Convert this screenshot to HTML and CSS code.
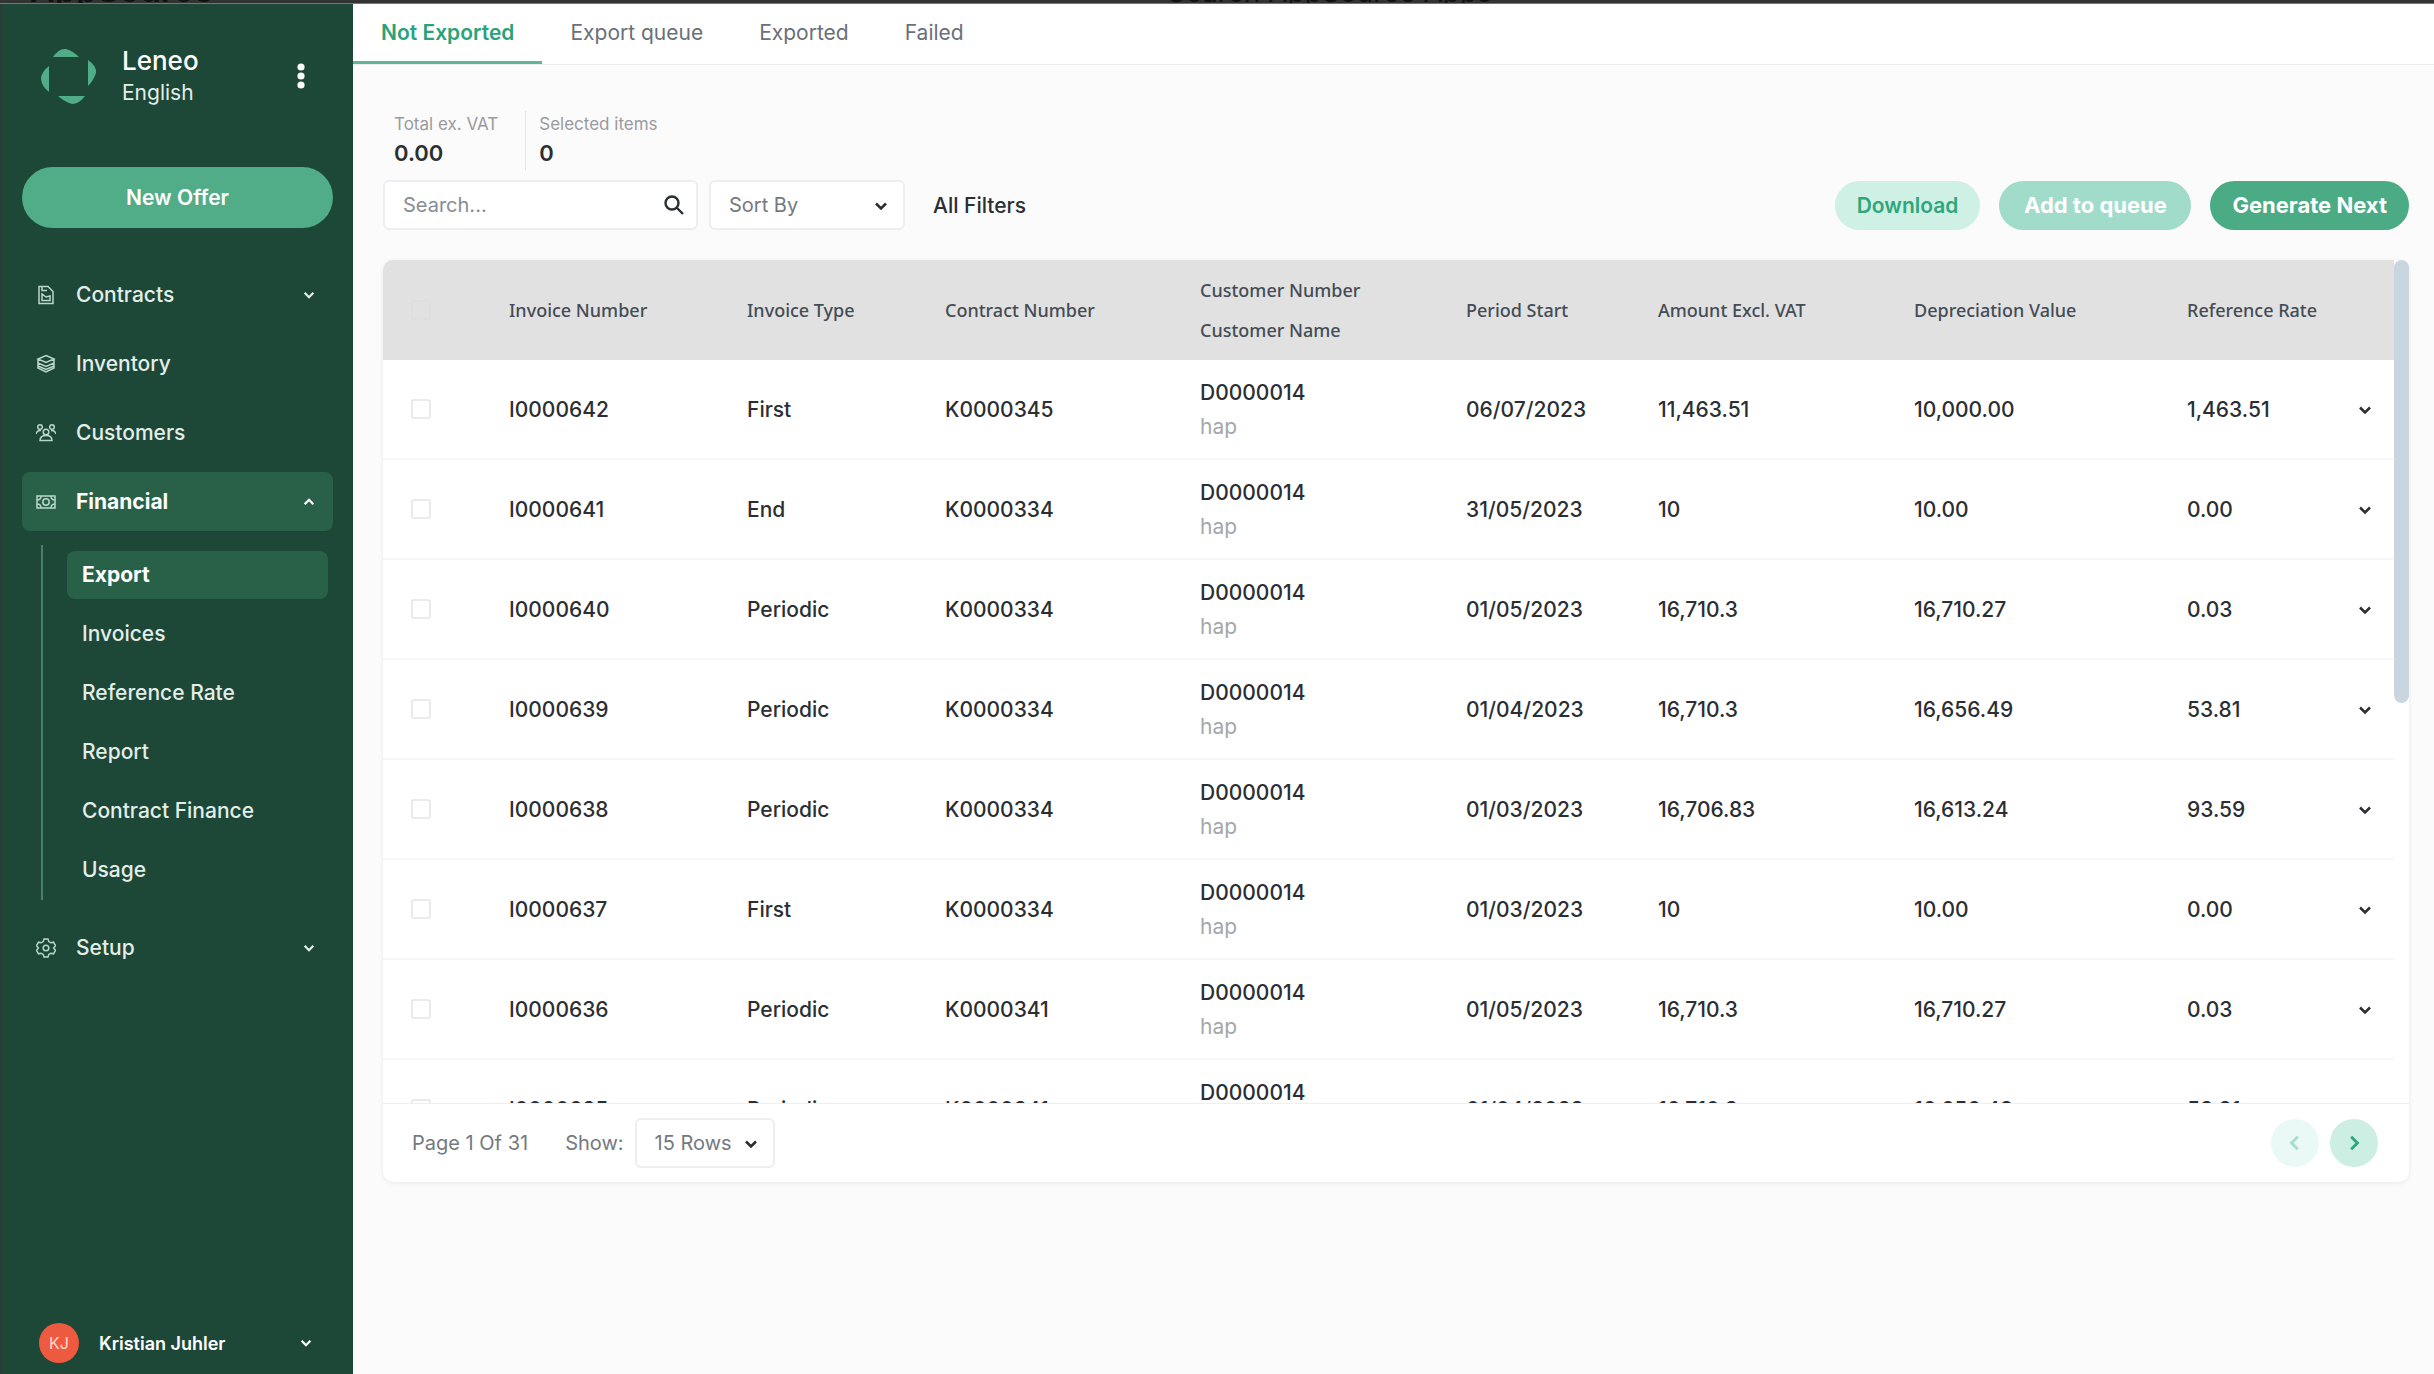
FILE: index.html
```html
<!DOCTYPE html>
<html lang="en">
<head>
  <meta charset="UTF-8" />
  <meta name="viewport" content="width=device-width, initial-scale=1.0" />
  <title>Leneo - Export</title>
  <link rel="stylesheet" href="styles.css">
</head>
<body>
  <svg class="sprite" aria-hidden="true">
    <symbol id="down" viewBox="0 0 16 16"><path d="M3 5.5l5 5 5-5" fill="none" stroke="currentColor" stroke-width="2.6" /></symbol>
    <symbol id="up" viewBox="0 0 16 16"><path d="M3 10.5l5-5 5 5" fill="none" stroke="currentColor" stroke-width="2.6" /></symbol>
  </svg>

  <div class="topstrip"><span class="site">AppSource</span><span>Search AppSource Apps</span></div>

  <div class="app">
    <aside class="sidebar">
      <div class="brand">
        <svg class="logo" viewBox="0 0 56 56" aria-hidden="true">
          <g fill="#50ad87">
            <path d="M12 9Q18 0 25 1Q32 3 38 9Z" />
            <path d="M47 12Q56 18 55 25Q53 32 47 38Z" />
            <path d="M44 48Q38 56 31 56Q24 54 17 48Z" />
            <path d="M8 18Q0 24 0 31Q1 39 8 44Z" />
          </g>
        </svg>
        <div class="brand-text">
          <strong>Leneo</strong>
          <span>English</span>
        </div>
        <button class="dots" type="button" aria-label="Menu">
          <svg viewBox="0 0 8 26"><g fill="#fff"><circle cx="4" cy="4" r="3.6" /><circle cx="4" cy="13" r="3.6" /><circle cx="4" cy="22" r="3.6" /></g></svg>
        </button>
      </div>

      <button class="new-offer" type="button">New Offer</button>

      <nav class="nav">
        <a class="nav-item" href="#">
          <svg class="nav-icon" viewBox="0 0 20 20"><path d="M3 1.5h9l5 5v12H3zM6 1.5v4h5M6 15.5V9l4 3 4-1v4.500z" /></svg>
          Contracts
          <svg class="chev"><use href="#down" /></svg>
        </a>
        <a class="nav-item" href="#">
          <svg class="nav-icon" viewBox="0 0 20 20"><path d="M10 1.500l8 3.500-8 3.500L2 5zM2 5v4l8 3.500L18 9V5M2 9v5l8 4 8-4V9M2 12l8 3.500 8-3.500" /></svg>
          Inventory
        </a>
        <a class="nav-item" href="#">
          <svg class="nav-icon" viewBox="0 0 20 20"><circle cx="4" cy="4" r="2.300" /><circle cx="16" cy="4" r="2.300" /><circle cx="10" cy="9" r="2.800" /><path d="M0 11q1-4 5-3.500M20 11q-1-4-5-3.500M4 17.500q0-5 6-5t6 5z" /></svg>
          Customers
        </a>
        <a class="nav-item active" href="#">
          <svg class="nav-icon" viewBox="0 0 20 20"><path d="M1 4h18v12H1zM1 8q4 0 4-4M19 8q-4 0-4-4M1 12q4 0 4 4M19 12q-4 0-4 4" /><circle cx="10" cy="10" r="3.200" /></svg>
          Financial
          <svg class="chev"><use href="#up" /></svg>
        </a>
        <div class="subnav">
          <a class="active" href="#">Export</a>
          <a href="#">Invoices</a>
          <a href="#">Reference Rate</a>
          <a href="#">Report</a>
          <a href="#">Contract Finance</a>
          <a href="#">Usage</a>
        </div>
        <a class="nav-item" href="#">
          <svg class="nav-icon" viewBox="0 0 20 20"><path d="M8 1h4l.8 2.600 2 1.200 2.700-.6 2 3.400L17.600 10l1.900 2.400-2 3.400-2.700-.6-2 1.200L12 19H8l-.8-2.600-2-1.200-2.700.6-2-3.400L2.400 10 .5 7.600l2-3.400 2.700.6 2-1.200z" /><circle cx="10" cy="10" r="2.800" /></svg>
          Setup
          <svg class="chev"><use href="#down" /></svg>
        </a>
      </nav>

      <button class="user" type="button">
        <span class="avatar">KJ</span>
        Kristian Juhler
        <svg class="chev"><use href="#down" /></svg>
      </button>
    </aside>

    <main class="main">
      <nav class="tabs">
        <a class="active" href="#">Not Exported</a>
        <a href="#">Export queue</a>
        <a href="#">Exported</a>
        <a href="#">Failed</a>
      </nav>

      <div class="content">
        <div class="stats">
          <div class="stat"><span>Total ex. VAT</span><strong>0.00</strong></div>
          <div class="stat"><span>Selected items</span><strong>0</strong></div>
        </div>

        <div class="toolbar">
          <div class="search">
            <input type="text" placeholder="Search..." aria-label="Search" />
            <svg viewBox="0 0 22 22" aria-hidden="true"><circle cx="9" cy="9" r="6.500" /><path d="M13.500 13.500l6.500 6.500" /></svg>
          </div>
          <div class="select sort">
            <select aria-label="Sort By"><option>Sort By</option></select>
            <svg class="chev"><use href="#down" /></svg>
          </div>
          <button class="filters" type="button">All Filters</button>
          <div class="actions">
            <button class="pill light" type="button">Download</button>
            <button class="pill faded" type="button">Add to queue</button>
            <button class="pill" type="button">Generate Next</button>
          </div>
        </div>

        <section class="card">
          <div class="scroll-area">
            <div class="table-wrap">
              <table>
                <colgroup>
                  <col class="c-check"><col class="c-number"><col class="c-type"><col class="c-contract"><col class="c-customer"><col class="c-period"><col class="c-amount"><col class="c-depr"><col class="c-rate"><col class="c-more">
                </colgroup>
                <thead>
                  <tr>
                    <th class="check"><input type="checkbox" aria-label="Select all" /></th>
                    <th>Invoice Number</th>
                    <th>Invoice Type</th>
                    <th>Contract Number</th>
                    <th>Customer Number<span>Customer Name</span></th>
                    <th>Period Start</th>
                    <th>Amount Excl. VAT</th>
                    <th>Depreciation Value</th>
                    <th>Reference Rate</th>
                    <th></th>
                  </tr>
                </thead>
                <tbody>
                  <tr>
                    <td class="check"><input type="checkbox" aria-label="Select I0000642" /></td>
                    <td>I0000642</td><td>First</td><td>K0000345</td>
                    <td>D0000014<span>hap</span></td>
                    <td>06/07/2023</td><td>11,463.51</td><td>10,000.00</td><td>1,463.51</td>
                    <td class="more"><button type="button" aria-label="Details"><svg class="chev"><use href="#down" /></svg></button></td>
                  </tr>
                  <tr>
                    <td class="check"><input type="checkbox" aria-label="Select I0000641" /></td>
                    <td>I0000641</td><td>End</td><td>K0000334</td>
                    <td>D0000014<span>hap</span></td>
                    <td>31/05/2023</td><td>10</td><td>10.00</td><td>0.00</td>
                    <td class="more"><button type="button" aria-label="Details"><svg class="chev"><use href="#down" /></svg></button></td>
                  </tr>
                  <tr>
                    <td class="check"><input type="checkbox" aria-label="Select I0000640" /></td>
                    <td>I0000640</td><td>Periodic</td><td>K0000334</td>
                    <td>D0000014<span>hap</span></td>
                    <td>01/05/2023</td><td>16,710.3</td><td>16,710.27</td><td>0.03</td>
                    <td class="more"><button type="button" aria-label="Details"><svg class="chev"><use href="#down" /></svg></button></td>
                  </tr>
                  <tr>
                    <td class="check"><input type="checkbox" aria-label="Select I0000639" /></td>
                    <td>I0000639</td><td>Periodic</td><td>K0000334</td>
                    <td>D0000014<span>hap</span></td>
                    <td>01/04/2023</td><td>16,710.3</td><td>16,656.49</td><td>53.81</td>
                    <td class="more"><button type="button" aria-label="Details"><svg class="chev"><use href="#down" /></svg></button></td>
                  </tr>
                  <tr>
                    <td class="check"><input type="checkbox" aria-label="Select I0000638" /></td>
                    <td>I0000638</td><td>Periodic</td><td>K0000334</td>
                    <td>D0000014<span>hap</span></td>
                    <td>01/03/2023</td><td>16,706.83</td><td>16,613.24</td><td>93.59</td>
                    <td class="more"><button type="button" aria-label="Details"><svg class="chev"><use href="#down" /></svg></button></td>
                  </tr>
                  <tr>
                    <td class="check"><input type="checkbox" aria-label="Select I0000637" /></td>
                    <td>I0000637</td><td>First</td><td>K0000334</td>
                    <td>D0000014<span>hap</span></td>
                    <td>01/03/2023</td><td>10</td><td>10.00</td><td>0.00</td>
                    <td class="more"><button type="button" aria-label="Details"><svg class="chev"><use href="#down" /></svg></button></td>
                  </tr>
                  <tr>
                    <td class="check"><input type="checkbox" aria-label="Select I0000636" /></td>
                    <td>I0000636</td><td>Periodic</td><td>K0000341</td>
                    <td>D0000014<span>hap</span></td>
                    <td>01/05/2023</td><td>16,710.3</td><td>16,710.27</td><td>0.03</td>
                    <td class="more"><button type="button" aria-label="Details"><svg class="chev"><use href="#down" /></svg></button></td>
                  </tr>
                  <tr>
                    <td class="check"><input type="checkbox" aria-label="Select I0000635" /></td>
                    <td>I0000635</td><td>Periodic</td><td>K0000341</td>
                    <td>D0000014<span>hap</span></td>
                    <td>01/04/2023</td><td>16,710.3</td><td>16,656.49</td><td>53.81</td>
                    <td class="more"><button type="button" aria-label="Details"><svg class="chev"><use href="#down" /></svg></button></td>
                  </tr>
                </tbody>
              </table>
            </div>
            <div class="track"><div class="thumb"></div></div>
          </div>

          <footer class="pager">
            <span>Page 1 Of 31</span>
            <label for="rows">Show:</label>
            <div class="select rows">
              <select id="rows"><option>15 Rows</option></select>
              <svg class="chev"><use href="#down" /></svg>
            </div>
            <div class="pager-buttons">
              <button type="button" aria-label="Previous page" disabled><svg viewBox="0 0 16 16"><path d="M10.500 2.500L5 8l5.500 5.500" /></svg></button>
              <button type="button" aria-label="Next page"><svg viewBox="0 0 16 16"><path d="M5.500 2.500L11 8l-5.500 5.500" /></svg></button>
            </div>
          </footer>
        </section>
      </div>
    </main>
  </div>
</body>
</html>
```
FILE: styles.css
```css
* {
  box-sizing: border-box;
}
body {
  margin: 0;
  min-height: 100vh;
  display: flex;
  flex-direction: column;
  font-family: Inter, "Open Sans", sans-serif;
  font-size: 20px;
  color: #2b2f33;
  background: #fbfbfb;
}
a {
  color: inherit;
  text-decoration: none;
}
button, input, select {
  font: inherit;
  color: inherit;
}
button {
  border: none;
  background: none;
  padding: 0;
}
.sprite {
  position: absolute;
  width: 0;
  height: 0;
}
.chev {
  width: 16px;
  height: 16px;
}

/* strip above the app */
.topstrip {
  height: 4px;
  overflow: hidden;
  display: flex;
  align-items: flex-end;
  gap: 954px;
  padding-left: 30px;
  background: #333;
  border-bottom: 1px solid #777;
  color: #111;
  font-size: 28px;
  font-weight: 400;
  line-height: 22px;
  white-space: nowrap;
}
.topstrip .site {
  font-size: 34px;
  font-weight: 600;
  line-height: 27px;
}
.app {
  flex: 1;
  display: flex;
}

/* sidebar */
.sidebar {
  width: 353px;
  flex-shrink: 0;
  display: flex;
  flex-direction: column;
  padding: 38px 20px 11px;
  background: #1d4737;
  border-left: 2px solid #30393a;
  color: #e3eee9;
  font-weight: 500;
}
.brand {
  display: flex;
  align-items: center;
  padding: 0 28px 0 19px;
}
.logo {
  width: 56px;
  height: 56px;
}
.brand-text {
  flex: 1;
  display: flex;
  flex-direction: column;
  margin-left: 25px;
  padding-top: 3px;
  font-size: 21px;
  font-weight: 400;
  line-height: 32px;
}
.brand-text strong {
  color: #fff;
  font-size: 26px;
  font-weight: 500;
}
.dots svg {
  display: block;
  width: 8px;
  height: 26px;
}
.new-offer {
  height: 61px;
  margin: 58px 0 37px;
  border-radius: 31px;
  background: #50ad87;
  color: #fff;
  font-size: 21px;
  font-weight: 600;
}
.nav {
  display: flex;
  flex-direction: column;
  gap: 10px;
  font-size: 21px;
}
.nav-item {
  height: 59px;
  display: flex;
  align-items: center;
  padding: 0 17px 0 14px;
  border-radius: 8px;
}
.nav-icon {
  width: 20px;
  height: 20px;
  margin-right: 20px;
  fill: none;
  stroke: #b9d6ca;
  stroke-width: 1.5;
}
.nav-item .chev, .user .chev {
  width: 14px;
  height: 14px;
  margin-left: auto;
}
.nav .active {
  background: #296148;
  color: #fff;
  font-weight: 700;
}
.subnav {
  display: flex;
  flex-direction: column;
  gap: 11px;
  margin: 4px 5px 8px 19px;
  padding: 6px 0;
  border-left: 2px solid #4a7f6a;
}
.subnav a {
  height: 48px;
  margin-left: 24px;
  padding-left: 15px;
  border-radius: 8px;
  line-height: 47px;
}
.user {
  display: flex;
  align-items: center;
  margin-top: auto;
  padding: 0 20px 0 17px;
  color: #fff;
  font-size: 18px;
  font-weight: 600;
}
.avatar {
  width: 40px;
  height: 40px;
  margin-right: 20px;
  border-radius: 50%;
  background: #ee5a40;
  color: #ffd9cf;
  font-size: 16px;
  font-weight: 400;
  line-height: 40px;
}

/* tabs */
.main {
  flex: 1;
  min-width: 0;
}
.tabs {
  display: flex;
  height: 61px;
  background: #fff;
  border-bottom: 1px solid #ececec;
  color: #6a6f78;
  font-size: 21px;
}
.tabs a {
  padding: 0 28px;
  line-height: 58px;
}
.tabs .active {
  border-bottom: 3px solid #5fb598;
  color: #2ba278;
  font-weight: 600;
}
.content {
  padding: 46px 25px 0 30px;
}

/* totals */
.stats {
  display: flex;
}
.stat {
  display: flex;
  flex-direction: column;
  height: 59px;
  padding: 0 27px 0 13px;
  border-right: 1px solid #e4e4e8;
}
.stat:first-child {
  padding-left: 11px;
}
.stat:last-child {
  border-right: none;
}
.stat span {
  color: #9a9a9e;
  font-size: 17px;
  line-height: 26px;
}
.stat strong {
  font-size: 22px;
  font-weight: 600;
  line-height: 32px;
}

/* search and actions */
.toolbar {
  display: flex;
  align-items: center;
  margin: 10px 0 30px;
}
.search, .select {
  position: relative;
  height: 50px;
}
.search input, .select select {
  width: 100%;
  height: 100%;
  padding: 0 18px;
  appearance: none;
  background: #fff;
  border: 2px solid #eceef2;
  border-radius: 6px;
  color: #74797f;
}
.search input::placeholder {
  color: #868c96;
}
.search {
  width: 315px;
}
.search svg {
  position: absolute;
  top: 14px;
  right: 13px;
  width: 22px;
  height: 22px;
  fill: none;
  stroke: #2b2f33;
  stroke-width: 2.4;
}
.select .chev {
  position: absolute;
  top: 18px;
  right: 16px;
  color: #2b2f33;
  pointer-events: none;
}
.sort {
  width: 196px;
  margin-left: 11px;
}
.filters {
  margin-left: 28px;
  font-size: 21px;
  font-weight: 500;
}
.actions {
  display: flex;
  gap: 19px;
  margin-left: auto;
}
.pill {
  height: 49px;
  padding: 0 22px;
  border-radius: 25px;
  background: #4bab84;
  color: #fff;
  font-size: 22px;
  font-weight: 700;
}
.pill.light {
  background: #cff0e5;
  color: #2fa67c;
  font-size: 21px;
  font-weight: 600;
}
.pill.faded {
  min-width: 192px;
  background: #a1dccb;
}

/* invoice table */
.card {
  background: #fff;
  border-radius: 10px;
  box-shadow: 0 1px 4px rgba(0,0,0,0.08);
}
.scroll-area {
  display: flex;
  height: 844px;
  border-bottom: 1px solid #efeff1;
}
.table-wrap {
  flex: 1;
  overflow: hidden;
  border-top-left-radius: 10px;
}
.track {
  width: 15px;
}
.thumb {
  height: 443px;
  border-radius: 8px;
  background: #c9d5df;
}
table {
  width: 100%;
  table-layout: fixed;
  border-collapse: separate;
  border-spacing: 0;
}
.c-check { width: 126px; }
.c-number { width: 238px; }
.c-type { width: 198px; }
.c-contract { width: 255px; }
.c-customer { width: 266px; }
.c-period { width: 192px; }
.c-amount { width: 256px; }
.c-depr { width: 273px; }
.c-rate { width: 170px; }
.c-more { width: 37px; }
th, td {
  height: 100px;
  padding: 0;
  text-align: left;
  white-space: nowrap;
}
th {
  background: #e1e1e1;
  color: #444c55;
  font-family: "Noto Sans", sans-serif;
  font-size: 18px;
  font-weight: 500;
}
th span, td span {
  display: block;
}
th span {
  line-height: 40px;
}
th:nth-child(5) {
  line-height: 40px;
}
td {
  padding-top: 2px;
  border-bottom: 2px solid #f6f6f6;
  font-size: 21px;
  font-weight: 500;
  line-height: 34px;
}
td span {
  color: #a4a7ab;
  font-weight: 400;
}
td.check {
  padding-top: 0;
}
.check input {
  display: block;
  width: 20px;
  height: 20px;
  margin: 0 0 0 28px;
  appearance: none;
  border: 2px solid #e9e9ee;
  border-radius: 3px;
}
th.check input {
  border-color: #dedee0;
}
.more button {
  display: block;
}
.more .chev {
  display: block;
}

/* pager */
.pager {
  display: flex;
  align-items: center;
  height: 78px;
  padding: 0 31px 0 29px;
  color: #74797f;
}
.pager label {
  margin: 0 11px 0 37px;
}
.rows {
  width: 140px;
}
.pager-buttons {
  display: flex;
  gap: 11px;
  margin-left: auto;
}
.pager-buttons button {
  display: flex;
  align-items: center;
  justify-content: center;
  width: 48px;
  height: 48px;
  border-radius: 50%;
  background: #cceee3;
  color: #2fa67c;
}
.pager-buttons button:disabled {
  background: #eaf9f5;
  color: #a9dccb;
}
.pager-buttons svg {
  width: 18px;
  height: 18px;
  fill: none;
  stroke: currentColor;
  stroke-width: 2.6;
}
```
